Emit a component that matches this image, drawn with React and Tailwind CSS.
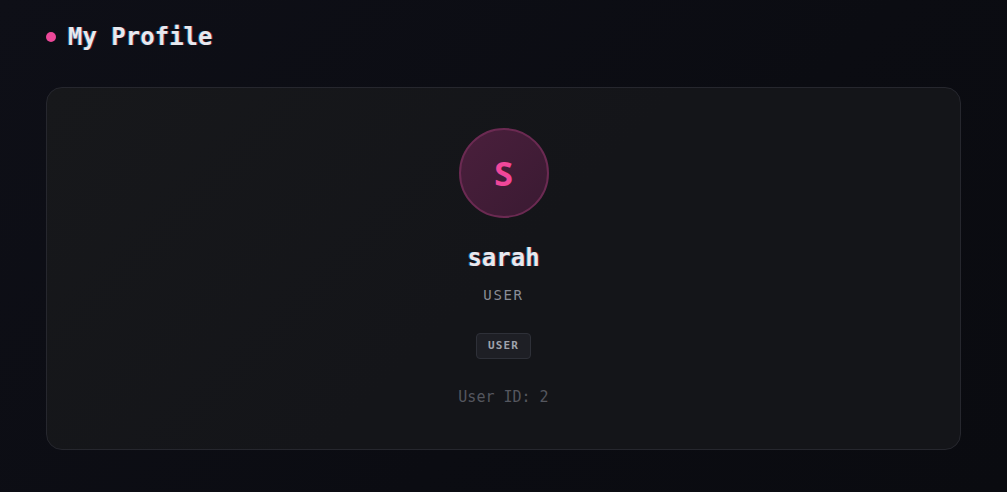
export default function App() {
  return (
    <div className="min-h-screen w-full bg-[linear-gradient(135deg,#0e0f17_0%,#0b0c12_60%,#0a0b10_100%)] px-[46px] pt-[24px] pb-[42px] font-['DejaVu_Sans_Mono',monospace]">
      {/* Heading */}
      <div className="flex items-center gap-[12px] h-[26px]">
        <span className="w-[10px] h-[10px] rounded-full bg-[#ec4899]" />
        <h1 className="text-[24px] leading-none font-bold text-[#e8e8ee] [text-shadow:-1px_0_rgba(0,190,255,0.45),1px_0_rgba(255,40,80,0.45)]">
          My Profile
        </h1>
      </div>

      {/* Profile card */}
      <div className="mt-[37px] h-[363px] rounded-[16px] border border-[#26272e] bg-[linear-gradient(135deg,#17181b_0%,#141519_50%,#141519_100%)] flex flex-col items-center pt-[40px]">
        <div className="w-[90px] h-[90px] rounded-full border-2 border-[#6b2a52] bg-[linear-gradient(135deg,#4a1f3c,#3a1a32)] flex items-center justify-center">
          <span className="text-[34px] font-bold text-[#f0479a] font-['Noto_Sans',sans-serif] leading-none">
            S
          </span>
        </div>

        <div className="mt-[25px] text-[24px] leading-[30px] font-bold text-[#e8e8ee] [text-shadow:-1px_0_rgba(0,190,255,0.45),1px_0_rgba(255,40,80,0.45)]">
          sarah
        </div>

        <div className="mt-[13px] text-[14px] leading-[18px] tracking-[0.12em] text-[#8a8d96]">
          USER
        </div>

        <div className="mt-[29px] h-[26px] px-[11px] rounded-[4px] border border-[#2e3038] bg-[#1e1f25] flex items-center text-[11px] font-bold tracking-[0.1em] text-[#a0a3ad]">
          USER
        </div>

        <div className="mt-[28px] text-[15px] leading-[20px] text-[#55575f]">
          User ID: 2
        </div>
      </div>
    </div>
  )
}
